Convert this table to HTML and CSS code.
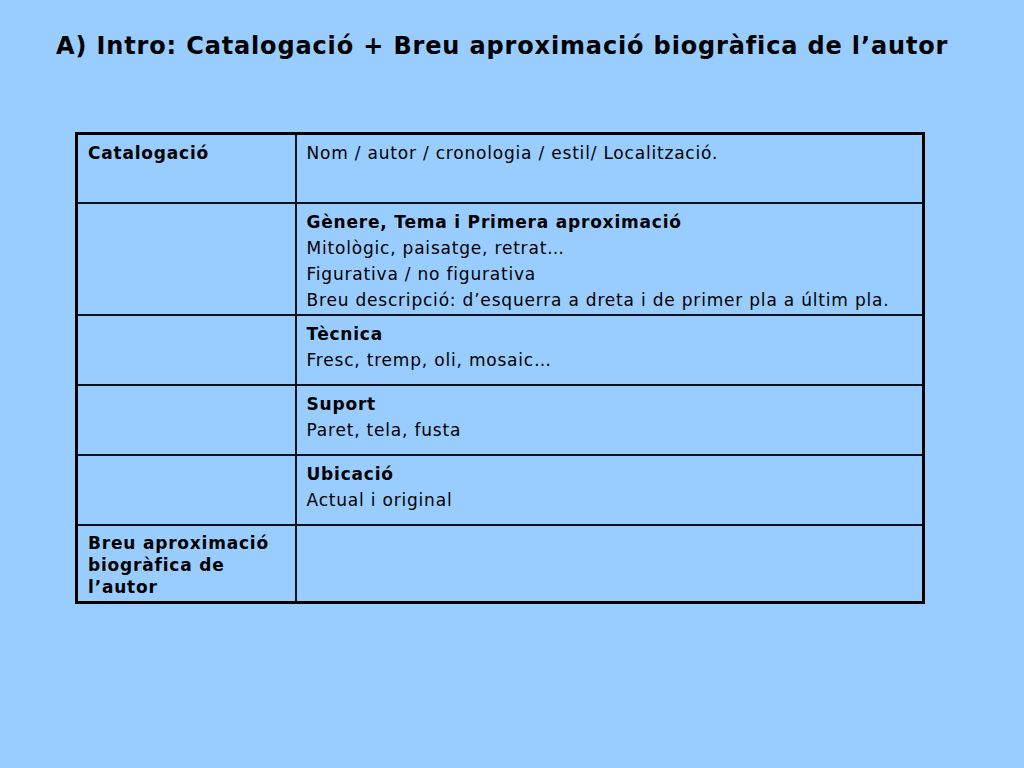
FILE: index.html
```html
<!DOCTYPE html>
<html lang="ca">
<head>
<meta charset="utf-8">
<link rel="stylesheet" href="styles.css">
</head>
<body>
<h1 class="title">A) Intro: Catalogació + Breu aproximació biogràfica de l’autor</h1>
<table class="grid">
  <colgroup><col class="c1"><col class="c2"></colgroup>
  <tr class="r1"><td class="b">Catalogació</td><td>Nom / autor / cronologia / estil/ Localització.</td></tr>
  <tr class="r2"><td></td><td><p class="b">Gènere, Tema i Primera aproximació</p><p>Mitològic, paisatge, retrat…</p><p>Figurativa / no figurativa</p><p>Breu descripció: d’esquerra a dreta i de primer pla a últim pla.</p></td></tr>
  <tr class="r3"><td></td><td><p class="b">Tècnica</p><p>Fresc, tremp, oli, mosaic…</p></td></tr>
  <tr class="r3"><td></td><td><p class="b">Suport</p><p>Paret, tela, fusta</p></td></tr>
  <tr class="r3"><td></td><td><p class="b">Ubicació</p><p>Actual i original</p></td></tr>
  <tr class="r6"><td class="b tight">Breu aproximació<br>biogràfica de<br>l’autor</td><td></td></tr>
</table>
</body>
</html>
```
FILE: styles.css
```css
html, body {
  margin: 0;
  padding: 0;
  background: #99ccff;
}
body {
  width: 1024px;
  height: 768px;
  overflow: hidden;
  font-family: "DejaVu Sans", Verdana, sans-serif;
  color: #000;
}
.title {
  margin: 0;
  padding: 31px 0 0 56px;
  font-size: 24px;
  font-weight: bold;
  letter-spacing: 0.85px;
  line-height: 30px;
  height: 30px;
  white-space: nowrap;
}
.grid {
  margin: 71px 0 0 75px;
  border-collapse: collapse;
  border: 3px solid #000;
  width: 847px;
  table-layout: fixed;
}
.c1 { width: 219px; }
.c2 { width: 628px; }
.grid td {
  border: 2px solid #0a0f1e;
  vertical-align: top;
  padding: 5px 10px 0 10px;
  font-size: 17px;
  letter-spacing: 0.8px;
  line-height: 26.3px;
  white-space: nowrap;
}
.grid td p { margin: 0; }
.b { font-weight: bold; }
.grid td.tight { line-height: 22px; padding-top: 6px; }
.r1 { height: 69px; }
.r2 { height: 110px; }
.r3 { height: 70px; }
.r6 { height: 78px; }
```
